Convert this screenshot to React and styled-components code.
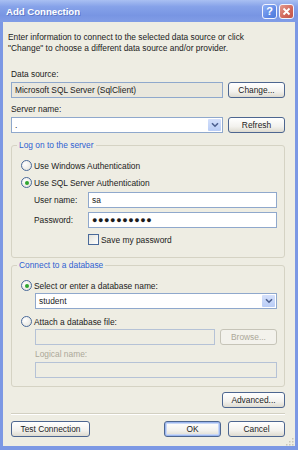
import React from "react";
import styled, { createGlobalStyle } from "styled-components";

const Global = createGlobalStyle`
  html, body { margin: 0; padding: 0; background: #fff; }
  * { box-sizing: border-box; }
`;

const Window = styled.div`
  width: 298px;
  height: 450px;
  display: flex;
  flex-direction: column;
  background: #7c98e4;
  font-family: "Liberation Sans", Arial, sans-serif;
  font-size: 8.4px;
  color: #1b1b1b;
`;

const TitleBar = styled.div`
  height: 22px;
  display: flex;
  align-items: center;
  padding: 0 4px 0 6px;
  background: linear-gradient(#a9c0f2, #86a2e9 30%, #7895e3 70%, #819de6);
`;

const Title = styled.div`
  flex: 1;
  color: #fff;
  font-weight: bold;
  font-size: 9.6px;
  text-shadow: 1px 1px 0 rgba(40, 60, 140, 0.35);
`;

const CapButton = styled.div`
  width: 15px;
  height: 15px;
  margin-left: 2px;
  border: 1px solid #f2f4ff;
  border-radius: 3px;
  display: flex;
  align-items: center;
  justify-content: center;
  color: #fff;
  font-weight: bold;
  font-size: 11px;
  background: ${(p) =>
    p.$close
      ? "linear-gradient(135deg, #e49a8f, #d0665a 60%, #c25448)"
      : "linear-gradient(135deg, #8fb0f4, #5f89e6 60%, #4f79da)"};
`;

const Body = styled.div`
  flex: 1;
  margin: 0 3px 4px 3px;
  background: #eeede3;
  padding: 10px 10px 0 5px;
  display: flex;
  flex-direction: column;
`;

const Intro = styled.div`
  line-height: 11px;
`;

const Section = styled.div`
  margin-left: 3px;
  margin-top: ${(p) => p.$mt || 0}px;
  display: flex;
  flex-direction: column;
`;

const Label = styled.div`
  line-height: 11px;
  color: ${(p) => (p.$disabled ? "#aca899" : "inherit")};
  margin-top: ${(p) => p.$mt || 0}px;
`;

const Row = styled.div`
  display: flex;
  align-items: center;
  gap: ${(p) => p.$gap ?? 5}px;
  margin-top: ${(p) => p.$mt || 0}px;
  padding-left: ${(p) => p.$indent || 0}px;
  justify-content: ${(p) => p.$justify || "flex-start"};
`;

const Field = styled.div`
  height: 16px;
  flex: ${(p) => (p.$width ? "none" : 1)};
  width: ${(p) => (p.$width ? p.$width + "px" : "auto")};
  border: 1px solid ${(p) => (p.$disabled ? "#b5c2d6" : "#8fa8cc")};
  background: ${(p) => (p.$readonly ? "#e9e7dd" : p.$disabled ? "#eeede3" : "#fff")};
  display: flex;
  align-items: center;
  padding-left: 3px;
  line-height: 11px;
  position: relative;
  letter-spacing: ${(p) => (p.$password ? "0.6px" : "0")};
  font-size: ${(p) => (p.$password ? "9px" : "inherit")};
`;

const DropButton = styled.div`
  position: absolute;
  right: 1px;
  top: 1px;
  bottom: 1px;
  width: 13px;
  background: linear-gradient(#d4e0fb, #b9cdf6);
  border-radius: 1px;
  display: flex;
  align-items: center;
  justify-content: center;
`;

const Button = styled.div`
  width: ${(p) => p.$width || 57}px;
  height: 16px;
  flex: none;
  border: 1px solid ${(p) => (p.$disabled ? "#c6c4b8" : "#4d6690")};
  border-radius: 3px;
  background: ${(p) =>
    p.$disabled ? "#f3f2ec" : "linear-gradient(#ffffff, #f3f2ee 60%, #dedbd0)"};
  color: ${(p) => (p.$disabled ? "#aca899" : "inherit")};
  display: flex;
  align-items: center;
  justify-content: center;
  line-height: 11px;
  box-shadow: ${(p) => (p.$default ? "inset 0 0 0 1px #9db7ef, inset 0 0 0 2px #c9d8f6" : "none")};
`;

const Group = styled.div`
  position: relative;
  margin-left: 3px;
  margin-top: ${(p) => p.$mt || 0}px;
  height: ${(p) => p.$h}px;
  border: 1px solid #d5d3c4;
  border-radius: 3px;
  padding: ${(p) => p.$pt}px 7px 0 9px;
  display: flex;
  flex-direction: column;
`;

const Legend = styled.div`
  position: absolute;
  top: -6px;
  left: 5px;
  padding: 0 2px;
  background: #eeede3;
  color: #2f5fd2;
  line-height: 11px;
`;

const Option = styled.div`
  display: flex;
  align-items: center;
  gap: 2px;
  height: 13px;
  margin-top: ${(p) => p.$mt || 0}px;
`;

const Radio = styled.span`
  width: 11px;
  height: 11px;
  border-radius: 50%;
  border: 1px solid #4a6a9a;
  background: radial-gradient(circle at 35% 35%, #fff, #e2e1d8);
  display: flex;
  align-items: center;
  justify-content: center;
  &::after {
    content: "";
    width: 4px;
    height: 4px;
    border-radius: 50%;
    background: ${(p) => (p.$checked ? "#2fa52f" : "transparent")};
  }
`;

const Check = styled.span`
  width: 11px;
  height: 11px;
  border: 1px solid #4a6a9a;
  background: linear-gradient(135deg, #e4e3db, #fff);
`;

const FieldLabel = styled.div`
  width: 54px;
  flex: none;
  line-height: 11px;
`;

const Separator = styled.div`
  margin: 5px 0 0 3px;
  height: 2px;
  border-top: 1px solid #d2d0c2;
  border-bottom: 1px solid #fff;
`;

const Grip = styled.svg`
  align-self: flex-end;
  margin: auto -9px 0 0;
`;

function Chevron() {
  return (
    <svg width="8" height="6" viewBox="0 0 8 6">
      <path d="M1 1.2 L4 4.2 L7 1.2" fill="none" stroke="#4c5f8f" strokeWidth="1.6" />
    </svg>
  );
}

function Combo({ value, width }) {
  return (
    <Field $width={width}>
      {value}
      <DropButton>
        <Chevron />
      </DropButton>
    </Field>
  );
}

export default function App() {
  return (
    <Window>
      <Global />
      <TitleBar>
        <Title>Add Connection</Title>
        <CapButton>?</CapButton>
        <CapButton $close>
          <svg width="9" height="9" viewBox="0 0 9 9">
            <path d="M1.5 1.5 L7.5 7.5 M7.5 1.5 L1.5 7.5" stroke="#fff" strokeWidth="1.8" />
          </svg>
        </CapButton>
      </TitleBar>
      <Body>
        <Intro>
          Enter information to connect to the selected data source or click
          <br />
          "Change" to choose a different data source and/or provider.
        </Intro>

        <Section $mt={15}>
          <Label>Data source:</Label>
          <Row $mt={2}>
            <Field $readonly>Microsoft SQL Server (SqlClient)</Field>
            <Button>Change...</Button>
          </Row>
          <Label $mt={6}>Server name:</Label>
          <Row $mt={2}>
            <Combo value="." width={212} />
            <Button>Refresh</Button>
          </Row>
        </Section>

        <Group $mt={12} $h={113} $pt={13}>
          <Legend>Log on to the server</Legend>
          <Option>
            <Radio />
            Use Windows Authentication
          </Option>
          <Option $mt={4}>
            <Radio $checked />
            Use SQL Server Authentication
          </Option>
          <Row $mt={3} $indent={13} $gap={0}>
            <FieldLabel>User name:</FieldLabel>
            <Field>sa</Field>
          </Row>
          <Row $mt={4} $indent={13} $gap={0}>
            <FieldLabel>Password:</FieldLabel>
            <Field $password>●●●●●●●●●●</Field>
          </Row>
          <Row $mt={6} $indent={67} $gap={2}>
            <Check />
            Save my password
          </Row>
        </Group>

        <Group $mt={7} $h={122} $pt={13}>
          <Legend>Connect to a database</Legend>
          <Option>
            <Radio $checked />
            Select or enter a database name:
          </Option>
          <Row $mt={1} $indent={14}>
            <Combo value="student" />
          </Row>
          <Option $mt={6}>
            <Radio />
            Attach a database file:
          </Option>
          <Row $mt={1} $indent={14}>
            <Field $disabled />
            <Button $disabled>Browse...</Button>
          </Row>
          <Row $mt={4} $indent={14}>
            <Label $disabled>Logical name:</Label>
          </Row>
          <Row $mt={2} $indent={14}>
            <Field $disabled />
          </Row>
        </Group>

        <Row $mt={5} $justify="flex-end">
          <Button $width={63}>Advanced...</Button>
        </Row>

        <Separator />

        <Row $mt={6} $gap={7}>
          <Section>
            <Button $width={79}>Test Connection</Button>
          </Section>
          <Row $gap={7} style={{ marginLeft: "auto" }}>
            <Button $default>OK</Button>
            <Button>Cancel</Button>
          </Row>
        </Row>

        <Grip width="8" height="8" viewBox="0 0 8 8">
          <g fill="#c8c6b8">
            <rect x="6" y="0" width="1.5" height="1.5" />
            <rect x="3" y="3" width="1.5" height="1.5" />
            <rect x="6" y="3" width="1.5" height="1.5" />
            <rect x="0" y="6" width="1.5" height="1.5" />
            <rect x="3" y="6" width="1.5" height="1.5" />
            <rect x="6" y="6" width="1.5" height="1.5" />
          </g>
        </Grip>
      </Body>
    </Window>
  );
}
